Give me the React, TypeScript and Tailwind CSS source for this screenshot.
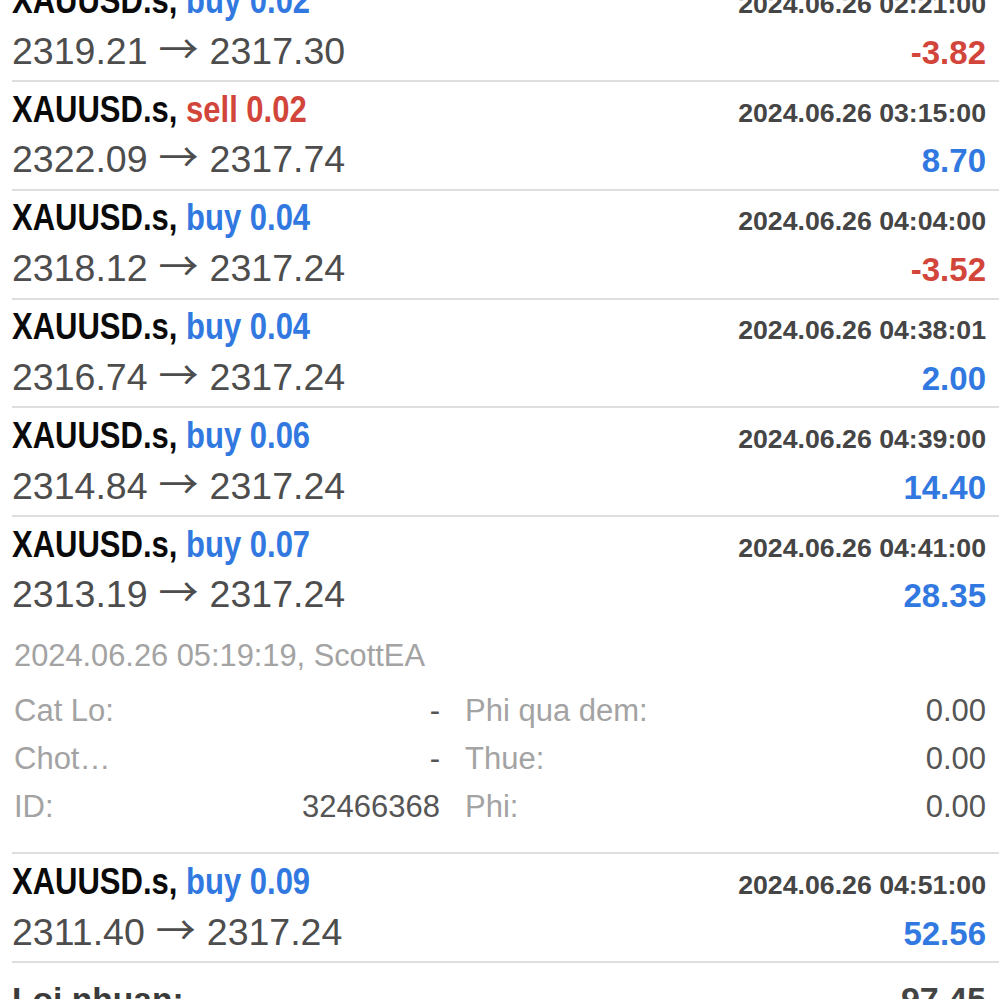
import React from "react";

type Trade = {
  side: "buy" | "sell";
  vol: string;
  open: string;
  close: string;
  time: string;
  profit: string;
  expanded?: boolean;
};

const trades: Trade[] = [
  { side: "buy", vol: "0.02", open: "2319.21", close: "2317.30", time: "2024.06.26 02:21:00", profit: "-3.82" },
  { side: "sell", vol: "0.02", open: "2322.09", close: "2317.74", time: "2024.06.26 03:15:00", profit: "8.70" },
  { side: "buy", vol: "0.04", open: "2318.12", close: "2317.24", time: "2024.06.26 04:04:00", profit: "-3.52" },
  { side: "buy", vol: "0.04", open: "2316.74", close: "2317.24", time: "2024.06.26 04:38:01", profit: "2.00" },
  { side: "buy", vol: "0.06", open: "2314.84", close: "2317.24", time: "2024.06.26 04:39:00", profit: "14.40" },
  { side: "buy", vol: "0.07", open: "2313.19", close: "2317.24", time: "2024.06.26 04:41:00", profit: "28.35", expanded: true },
  { side: "buy", vol: "0.09", open: "2311.40", close: "2317.24", time: "2024.06.26 04:51:00", profit: "52.56" },
];

function Lines({ t }: { t: Trade }) {
  const neg = t.profit.startsWith("-");
  return (
    <>
      <div className="flex items-baseline justify-between pt-[8.7px]">
        <span className="inline-block origin-left scale-x-[0.838] whitespace-nowrap text-[37px] leading-none font-bold text-[#0a0a0a]">
          XAUUSD.s,{" "}
          <span className={t.side === "buy" ? "text-[#3178e0]" : "text-[#d2453a]"}>
            {t.side} {t.vol}
          </span>
        </span>
        <span className="text-[26.7px] leading-none font-bold text-[#454545]">{t.time}</span>
      </div>
      <div className="mt-[13.6px] flex items-baseline justify-between">
        <span className="whitespace-nowrap text-[37.5px] leading-none text-[#4d4d4d]">
          {t.open}
          <span className="mx-[11px] font-['Noto_Sans_CJK_SC','DejaVu_Sans',sans-serif] text-[40px] leading-[0]">→</span>
          {t.close}
        </span>
        <span className={"text-[33px] leading-none font-bold " + (neg ? "text-[#d2453a]" : "text-[#3178e0]")}>
          {t.profit}
        </span>
      </div>
    </>
  );
}

function Detail() {
  const cells: [string, string][] = [
    ["Cat Lo:", "-"],
    ["Phi qua dem:", "0.00"],
    ["Chot…", "-"],
    ["Thue:", "0.00"],
    ["ID:", "32466368"],
    ["Phi:", "0.00"],
  ];
  return (
    <>
      <div className="mt-[27.5px] pl-[2px] text-[30.8px] leading-none text-[#a3a3a3]">
        2024.06.26 05:19:19, ScottEA
      </div>
      <div className="mt-[15px] grid grid-cols-[428px_1fr] gap-x-[25px] pb-[21.4px] text-[31px] leading-[48px]">
        {cells.map(([label, value], i) => (
          <div key={i} className={"flex justify-between " + (i % 2 === 0 ? "pl-[2px]" : "")}>
            <span className="text-[#a3a3a3]">{label}</span>
            <span className="text-[#555555]">{value}</span>
          </div>
        ))}
      </div>
    </>
  );
}

export default function App() {
  return (
    <div className="h-[999px] w-[999px] overflow-hidden bg-white font-['Liberation_Sans',Arial,sans-serif]">
      <div className="-mt-[26.75px]">
        {trades.map((t, i) =>
          t.expanded ? (
            <div key={i} className="ml-3 border-b-2 border-[#dedede] pr-[13px]">
              <Lines t={t} />
              <Detail />
            </div>
          ) : (
            <div key={i} className="ml-3 h-[108.75px] border-b-2 border-[#dedede] pr-[13px]">
              <Lines t={t} />
            </div>
          )
        )}
        <div className="ml-3 flex items-baseline justify-between pr-[13px] pt-[19px]">
          <span className="text-[33.6px] leading-none font-bold text-[#3a3a3a]">Loi nhuan:</span>
          <span className="text-[34px] leading-none font-bold text-[#444444]">97.45</span>
        </div>
      </div>
    </div>
  );
}
